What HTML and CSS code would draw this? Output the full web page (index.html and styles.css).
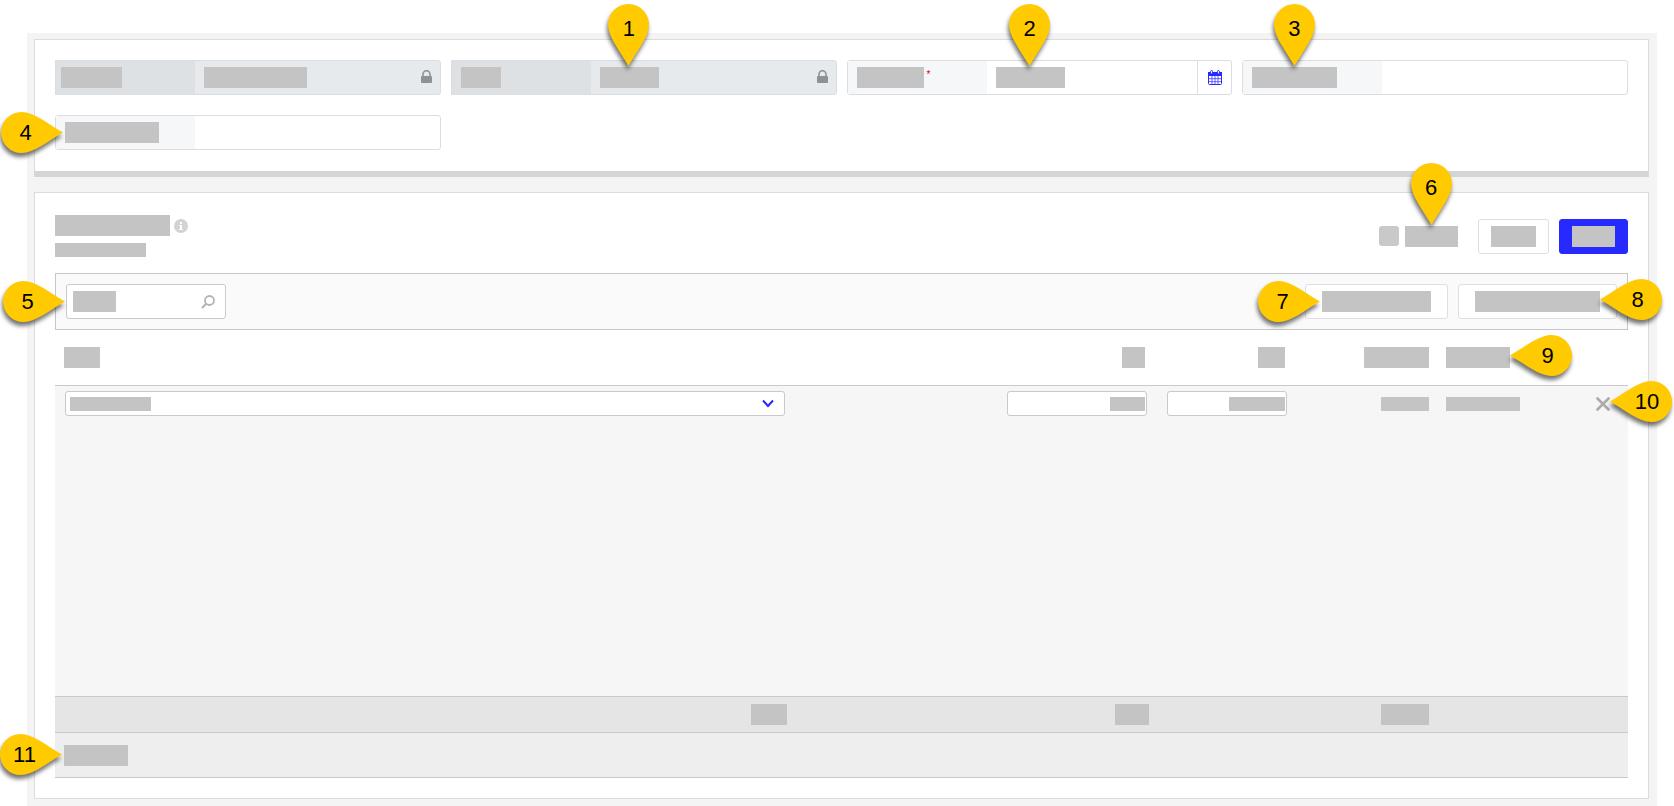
FILE: index.html
```html
<!DOCTYPE html>
<html lang="en">
	<head>
		<meta charset="utf-8">
		<title></title>
		<link rel="stylesheet" href="styles.css">
	</head>
	<body>
		<!-- shared shapes -->
		<svg class="sprite" width="0" height="0">
			<symbol id="pin-down" viewBox="0 0 41 62">
				<path id="drop" d="M20.5 62C12 47 0 33 0 20.5A20.5 20.5 0 0 1 41 20.5C41 33 29 47 20.5 62Z"/>
			</symbol>
			<symbol id="pin-right" viewBox="0 0 62 41">
				<use href="#drop" transform="rotate(-90) translate(-41 0)"/>
			</symbol>
			<symbol id="pin-left" viewBox="0 0 62 41">
				<use href="#drop" transform="rotate(90) translate(0 -62)"/>
			</symbol>
			<symbol id="lock" viewBox="0 0 11 13">
				<path d="M2 6.5V4.2a3.5 3.5 0 0 1 7 0v2.3" fill="none" stroke="#8e9298" stroke-width="1.6"/>
				<rect y="6" width="11" height="7" rx="1" fill="#8e9298"/>
			</symbol>
		</svg>

		<div class="page">
			<div class="panel panel-head">
				<div class="field locked tight">
					<label for="f1"><span class="mask w61"></span></label>
					<div class="value">
						<span class="mask w103"></span>
						<input id="f1" type="text" readonly>
						<svg class="lock" width="11" height="13"><use href="#lock"/></svg>
					</div>
				</div>
				<div class="field locked">
					<label for="f2"><span class="mask w40"></span></label>
					<div class="value">
						<span class="mask w59"><span class="pin down"><svg><use href="#pin-down"/></svg><b>1</b></span></span>
						<input id="f2" type="text" readonly>
						<svg class="lock" width="11" height="13"><use href="#lock"/></svg>
					</div>
				</div>
				<div class="field">
					<label for="f3"><span class="mask w67"></span><i>*</i></label>
					<div class="value">
						<span class="mask w69"><span class="pin down"><svg><use href="#pin-down"/></svg><b>2</b></span></span>
						<input id="f3" type="text">
						<button type="button" class="date">
							<svg width="14" height="15" viewBox="0 0 14 15">
								<rect x="0.5" y="2.5" width="13" height="12" rx="1" fill="#fff" stroke="#272aff"/>
								<path d="M0 2h14v4H0z" fill="#272aff"/>
								<path d="M4 6v9M7 6v9M10 6v9M0 8.7h14M0 11.7h14" stroke="#272aff" stroke-width=".7"/>
								<rect x="2.6" y="0.5" width="2" height="3.5" rx="1" fill="#fff" stroke="#272aff"/>
								<rect x="9.4" y="0.5" width="2" height="3.5" rx="1" fill="#fff" stroke="#272aff"/>
							</svg>
						</button>
					</div>
				</div>
				<div class="field">
					<label for="f4"><span class="mask w85"><span class="pin down"><svg><use href="#pin-down"/></svg><b>3</b></span></span></label>
					<div class="value"><input id="f4" type="text"></div>
				</div>
				<div class="field">
					<label for="f5"><span class="mask w94"><span class="pin right"><svg><use href="#pin-right"/></svg><b>4</b></span></span></label>
					<div class="value"><input id="f5" type="text"></div>
				</div>
			</div>

			<div class="panel panel-lines">
				<div class="top">
					<div class="titles">
						<div class="title">
							<span class="mask w115"></span>
							<svg width="14" height="14" viewBox="0 0 14 14">
								<circle cx="7" cy="7" r="7" fill="#d3d3d3"/>
								<path d="M6 3h2v2H6zM5 6h3v4h1v1H5v-1h1V7H5z" fill="#fff"/>
							</svg>
						</div>
						<span class="mask small w91"></span>
					</div>
					<div class="actions">
						<input id="chk" type="checkbox">
						<label for="chk"><span class="mask w53"><span class="pin down"><svg><use href="#pin-down"/></svg><b>6</b></span></span></label>
						<button type="button" class="btn"><span class="mask w45"></span></button>
						<button type="button" class="btn primary"><span class="mask w43"></span></button>
					</div>
				</div>

				<div class="toolbar">
					<label class="search">
						<span class="mask w43"></span>
						<input type="text">
						<svg width="14" height="14" viewBox="0 0 14 14" fill="none" stroke="#b3b3b3">
							<circle cx="8.5" cy="5.5" r="4.5" stroke-width="1.8"/>
							<path d="M5.2 8.8L1 13" stroke-width="2"/>
						</svg>
						<span class="pin right"><svg><use href="#pin-right"/></svg><b>5</b></span>
					</label>
					<div class="tools">
						<button type="button" class="btn wide"><span class="mask w109"><span class="pin right"><svg><use href="#pin-right"/></svg><b>7</b></span></span></button>
						<button type="button" class="btn wide"><span class="mask w125"><span class="pin left"><svg><use href="#pin-left"/></svg><b>8</b></span></span></button>
					</div>
				</div>

				<table>
					<colgroup>
						<col>
						<col class="c2">
						<col class="c3">
						<col class="c4">
						<col class="c5">
						<col class="c6">
					</colgroup>
					<thead>
						<tr>
							<th><span class="mask w36"></span></th>
							<th class="num edit"><span class="mask w23"></span></th>
							<th class="num edit"><span class="mask w27"></span></th>
							<th class="num"><span class="mask w65"></span></th>
							<th><span class="mask w64"><span class="pin left"><svg><use href="#pin-left"/></svg><b>9</b></span></span></th>
							<th></th>
						</tr>
					</thead>
					<tbody>
						<tr class="line">
							<td class="edit">
								<label class="box">
									<span class="mask small w81"></span>
									<select><option></option></select>
									<svg width="12" height="9" viewBox="0 0 12 9"><path d="M1 1.5l5 5.5 5-5.5" fill="none" stroke="#272aff" stroke-width="2"/></svg>
								</label>
							</td>
							<td class="edit num">
								<label class="box qty"><input type="text"><span class="mask small w35"></span></label>
							</td>
							<td class="edit num">
								<label class="box qty"><input type="text"><span class="mask small w56"></span></label>
							</td>
							<td class="num"><span class="mask small w48"></span></td>
							<td><span class="mask small w74"></span></td>
							<td class="del">
								<button type="button" class="remove">
									<svg width="14" height="14" viewBox="0 0 14 14"><path d="M1.5 1.5l11 11M12.5 1.5l-11 11" stroke="#ababab" stroke-width="2.6" stroke-linecap="round"/></svg>
									<span class="pin left"><svg><use href="#pin-left"/></svg><b>10</b></span>
								</button>
							</td>
						</tr>
						<tr class="empty"><td colspan="6"></td></tr>
					</tbody>
					<tfoot>
						<tr class="total">
							<td class="num"><span class="mask w36"></span></td>
							<td class="num"><span class="mask w34"></span></td>
							<td></td>
							<td class="num"><span class="mask w48"></span></td>
							<td></td>
							<td></td>
						</tr>
						<tr class="count">
							<td colspan="6"><span class="mask w64"><span class="pin right"><svg><use href="#pin-right"/></svg><b>11</b></span></span></td>
						</tr>
					</tfoot>
				</table>
			</div>
		</div>
	</body>
</html>
```

FILE: styles.css
```css
*{
	box-sizing: border-box;
	margin: 0;
	padding: 0;
}
body{
	background: #fff;
	font: 14px/20px "Liberation Sans", Arial, sans-serif;
	color: #000;
}
.sprite{
	position: absolute;
}
svg{
	display: block;
	flex: none;
}
input,select,button{
	font: inherit;
	border: 0;
	outline: 0;
	background: transparent;
}
input[type=text],select{
	flex: 1;
	min-width: 0;
	height: 100%;
	appearance: none;
}
button{
	cursor: pointer;
}
.page{
	margin: 33px 17px 0 27px;
	padding: 6px 8px 7px 7px;
	background: #f4f4f4;
}
.panel{
	background: #fff;
	border: 1px solid #dcdcdc;
	padding: 20px;
}

/* grey text blocks */
.mask{
	display: block;
	flex: none;
	position: relative;
	height: 21px;
	background: #c4c4c4;
}
.mask.small{
	height: 14px;
}
.w23{ width: 23px; }
.w27{ width: 27px; }
.w34{ width: 34px; }
.w35{ width: 35px; }
.w36{ width: 36px; }
.w40{ width: 40px; }
.w43{ width: 43px; }
.w45{ width: 45px; }
.w48{ width: 48px; }
.w53{ width: 53px; }
.w56{ width: 56px; }
.w59{ width: 59px; }
.w61{ width: 61px; }
.w64{ width: 64px; }
.w65{ width: 65px; }
.w67{ width: 67px; }
.w69{ width: 69px; }
.w74{ width: 74px; }
.w81{ width: 81px; }
.w85{ width: 85px; }
.w91{ width: 91px; }
.w94{ width: 94px; }
.w103{ width: 103px; }
.w109{ width: 109px; }
.w115{ width: 115px; }
.w125{ width: 125px; }

/* header fields */
.panel-head{
	display: grid;
	grid-template-columns: repeat(4, minmax(0, 1fr));
	gap: 20px 10px;
	padding-bottom: 21px;
	border-bottom: 6px solid #d5d5d5;
}
.field{
	display: flex;
	height: 35px;
	border: 1px solid #dadde1;
	border-radius: 3px;
}
.field label{
	display: flex;
	align-items: center;
	flex: none;
	width: 139px;
	padding-left: 9px;
	background: #f6f7f9;
}
.field.tight label{
	padding-left: 5px;
}
.field label i{
	align-self: flex-start;
	margin-left: 3px;
	font: 10px/28px "Liberation Sans", Arial, sans-serif;
	color: #d0021b;
}
.value{
	display: flex;
	align-items: center;
	flex: 1;
	min-width: 0;
	padding-left: 9px;
}
.locked{
	background: #e7eaed;
	border-radius: 0 3px 3px 0;
}
.locked label{
	background: #dde1e4;
}
.lock{
	margin: 0 8px 2px 0;
}
.date{
	display: flex;
	align-items: center;
	justify-content: center;
	width: 34px;
	height: 100%;
	border-left: 1px solid #dadde1;
}

/* lines */
.panel-lines{
	margin-top: 15px;
}
.top{
	display: flex;
	align-items: center;
	justify-content: space-between;
	padding: 2px 0 16px;
}
.titles{
	display: grid;
	gap: 7px;
}
.title{
	display: flex;
	align-items: center;
	gap: 4px;
}
.actions,.tools{
	display: flex;
	align-items: center;
	gap: 10px;
}
.actions input{
	appearance: none;
	width: 20px;
	height: 20px;
	margin-right: -4px;
	border-radius: 3px;
	background: #c9c9c9;
}
.actions label{
	margin-right: 10px;
}
.btn{
	display: flex;
	align-items: center;
	height: 35px;
	padding: 0 12px;
	background: #fff;
	border: 1px solid #dedfe3;
	border-radius: 3px;
}
.btn.wide{
	padding: 0 16px;
}
.btn.primary{
	background: #272aff;
	border-color: #272aff;
}
.toolbar{
	display: flex;
	justify-content: space-between;
	padding: 10px;
	background: #fafafa;
	border: 1px solid #c6c6c6;
}
.search{
	display: flex;
	align-items: center;
	position: relative;
	width: 160px;
	height: 35px;
	padding: 0 10px 0 6px;
	background: #fff;
	border: 1px solid #cacaca;
	border-radius: 3px;
}

table{
	width: 100%;
	table-layout: fixed;
	border-spacing: 0;
}
.c2{ width: 362px; }
.c3,.c4,.c5{ width: 140px; }
.c6{ width: 51px; }
th,td{
	padding: 0 8px 0 9px;
	vertical-align: middle;
}
th{
	height: 56px;
	border-bottom: 1px solid #c9c9c9;
}
th.edit{
	padding-right: 12px;
}
td.edit{
	padding: 0 10px;
}
.num .mask,.num .box{
	margin-left: auto;
}
.line td{
	height: 35px;
	background: #f6f6f6;
}
.empty td{
	height: 275px;
	background: #f6f6f6;
}
.box{
	display: flex;
	align-items: center;
	height: 25px;
	padding: 0 10px 0 4px;
	background: #fff;
	border: 1px solid #c9c9c9;
	border-radius: 3px;
}
.box.qty{
	max-width: 140px;
	padding: 0 1px;
}
.line .del{
	padding: 0;
}
.remove{
	display: block;
	position: relative;
	margin: 0 auto;
}
.total td{
	height: 36px;
	background: #e5e5e5;
	border-top: 1px solid #c9c9c9;
}
.count td{
	height: 46px;
	background: #eee;
	border-top: 1px solid #c9c9c9;
	border-bottom: 1px solid #c9c9c9;
}

/* callouts */
.pin{
	position: absolute;
	z-index: 10;
	width: 62px;
	height: 41px;
	fill: #ffcb00;
}
.pin svg{
	width: 100%;
	height: 100%;
	overflow: visible;
	filter: drop-shadow(-1px 4px 2px rgba(0,0,0,.55));
}
.pin b{
	position: absolute;
	top: 0;
	width: 49px;
	font-size: 22px;
	font-weight: normal;
	line-height: 41px;
	text-align: center;
}
.pin.right{
	right: 100%;
	top: calc(50% - 21px);
	margin-right: 2px;
}
.pin.right b{
	left: 0;
}
.pin.left{
	left: 100%;
	top: calc(50% - 23px);
}
.pin.left b{
	right: 0;
}
.pin.down{
	width: 41px;
	height: 62px;
	left: calc(50% - 21px);
	bottom: 100%;
	margin-bottom: 1px;
}
.pin.down b{
	left: 0;
	width: 41px;
	line-height: 50px;
}
```
